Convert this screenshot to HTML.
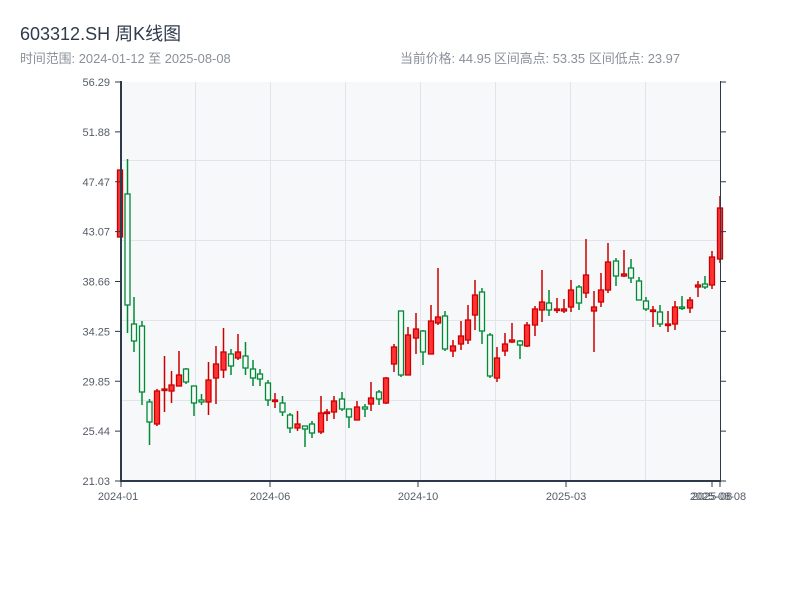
<!DOCTYPE html>
<html><head><meta charset="utf-8"><style>
html,body{margin:0;padding:0;background:#fff;width:800px;height:600px;overflow:hidden}
svg{display:block}
text{font-family:"Liberation Sans","Noto Sans CJK SC",sans-serif}
</style></head><body>
<svg id="s" width="800" height="600" xmlns="http://www.w3.org/2000/svg">
<text x="20" y="40" font-size="18" fill="#2f3b4c">603312.SH 周K线图</text>
<text x="20" y="63" font-size="12.9" fill="#8a9099">时间范围: 2024-01-12 至 2025-08-08</text>
<text x="400" y="63" font-size="12.9" fill="#8a9099">当前价格: 44.95</text>
<text x="494" y="63" font-size="12.9" fill="#8a9099">区间高点: 53.35</text>
<text x="589" y="63" font-size="12.9" fill="#8a9099">区间低点: 23.97</text>
<rect x="122" y="82" width="598" height="399" fill="#f6f8fa"/>
<g stroke="#e1e4ea" stroke-width="1">
<line x1="195.5" y1="82" x2="195.5" y2="480"/><line x1="270.5" y1="82" x2="270.5" y2="480"/>
<line x1="345.5" y1="82" x2="345.5" y2="480"/><line x1="420.5" y1="82" x2="420.5" y2="480"/>
<line x1="495.5" y1="82" x2="495.5" y2="480"/><line x1="570.5" y1="82" x2="570.5" y2="480"/>
<line x1="645.5" y1="82" x2="645.5" y2="480"/>
<line x1="122" y1="160.5" x2="720" y2="160.5"/><line x1="122" y1="240.5" x2="720" y2="240.5"/>
<line x1="122" y1="320.5" x2="720" y2="320.5"/><line x1="122" y1="400.5" x2="720" y2="400.5"/>
</g>
<g id="c"></g>
<g stroke="#2c3a4c">
<line x1="121" y1="81" x2="121" y2="482" stroke-width="2"/>
<line x1="720.5" y1="81" x2="720.5" y2="482" stroke-width="1"/>
<line x1="120" y1="481" x2="721" y2="481" stroke-width="2"/>
<g id="t" stroke-width="1"></g>
</g>
<g font-size="11" fill="#555d68" text-anchor="end" id="yl"></g>
<g font-size="11" fill="#555d68" text-anchor="middle">
<text x="118" y="500">2024-01</text><text x="270" y="500">2024-06</text>
<text x="418" y="500">2024-10</text><text x="566" y="500">2025-03</text>
<text x="712" y="500">2025-08</text><text x="718" y="500">2025-08-08</text>
</g>
</svg>
<script>
var d=[[120,170,237,170,237,'r'],[127.5,194,305,159,333,'g'],[134,324,341,297,352,'g'],[142,326,392,321,405,'g'],[149.5,402,422,399,445,'g'],[157,391,424,389,426,'r'],[164.5,389,390,356,412,'r'],[171.5,385,391,371,403,'r'],[179,375,386,351,386,'r'],[186,369,382,368,384,'g'],[194,386,403,386,416,'g'],[201.5,400,402,394,405,'g'],[208.5,380,402,362,415,'r'],[216,364,378,346,404,'r'],[223.5,352,370,328,378,'r'],[231,354,366,349,375,'g'],[238,352,358,334,360,'r'],[245.5,356,368,342,375,'g'],[253,369,378,360,386,'g'],[260,374,379,369,386,'g'],[268,383,400,380,406,'g'],[275,400,401,393,408,'r'],[282.5,403,412,396,416,'g'],[290,415,428,413,433,'g'],[297.5,424,428,411,431,'r'],[305,426,429,426,447,'g'],[312,424,433,421,438,'g'],[321,413,432,396,434,'r'],[327,412,413,409,421,'r'],[334,401,412,396,419,'r'],[342,399,409,392,411,'g'],[349,409,417,409,428,'g'],[357,407,420,401,420,'r'],[365,407,409,404,417,'g'],[371,398,404,382,411,'r'],[379,392,399,390,405,'g'],[386,378,403,377,404,'r'],[394,347,364,344,372,'r'],[401,311,375,311,377,'g'],[408,335,375,327,375,'r'],[416,329,338,313,354,'r'],[423,331,352,330,365,'g'],[431,321,354,305,354,'r'],[438,317,323,268,325,'r'],[445,316,349,311,351,'g'],[453,346,351,340,357,'r'],[461,336,344,321,350,'r'],[468,320,340,305,344,'r'],[475,295,315,280,330,'r'],[482,292,331,288,344,'g'],[490,335,376,333,378,'g'],[497,358,378,347,382,'r'],[505,344,351,333,356,'r'],[512,340,342,323,343,'r'],[520,341,345,340,359,'g'],[527,325,346,322,347,'r'],[535,309,325,306,336,'r'],[542,302,310,270,322,'r'],[549,303,310,290,316,'g'],[557,309,310,298,313,'r'],[564,309,311,299,313,'r'],[571,290,307,280,312,'r'],[579,287,303,285,310,'g'],[586,275,293,239,298,'r'],[594,307,311,291,352,'r'],[601,290,302,273,307,'r'],[608,262,290,243,293,'r'],[616,261,276,258,286,'g'],[624,274,276,250,277,'r'],[631,268,278,259,283,'g'],[639,281,300,277,300,'g'],[646,301,309,297,311,'g'],[653,310,311,306,327,'r'],[660,312,324,305,327,'g'],[668,324,325,311,332,'r'],[675,307,324,301,330,'r'],[682,307,308,296,310,'g'],[690,300,308,297,313,'r'],[698,285,287,281,297,'r'],[705,284,287,276,289,'g'],[712,257,285,251,289,'r'],[720,208,259,196,263,'r']];
var h='';
d.forEach(function(c){var col=c[5]=='r'?'#cc0000':'#008a35',f=c[5]=='r'?'#ff3333':'#f6f8fa';
h+='<line x1="'+c[0]+'" y1="'+c[3]+'" x2="'+c[0]+'" y2="'+c[4]+'" stroke="'+col+'" stroke-width="1.5"/>';
var hh=Math.max(c[2]-c[1],1.5);
h+='<rect x="'+(c[0]-2.5)+'" y="'+c[1]+'" width="5" height="'+hh+'" fill="'+f+'" stroke="'+col+'" stroke-width="1.3"/>';});
document.getElementById('c').innerHTML=h;
var lab=['56.29','51.88','47.47','43.07','38.66','34.25','29.85','25.44','21.03'],t='',yl='';
for(var i=0;i<9;i++){var y=82+i*49.875;t+='<line x1="115" y1="'+y+'" x2="121" y2="'+y+'"/><line x1="720" y1="'+y+'" x2="726" y2="'+y+'"/>';
yl+='<text x="110" y="'+(y+4)+'">'+lab[i]+'</text>';}
[121,270,418,566,712,720].forEach(function(x){t+='<line x1="'+x+'" y1="481" x2="'+x+'" y2="487"/>';});
document.getElementById('t').innerHTML=t;document.getElementById('yl').innerHTML=yl;
</script>
</body></html>
